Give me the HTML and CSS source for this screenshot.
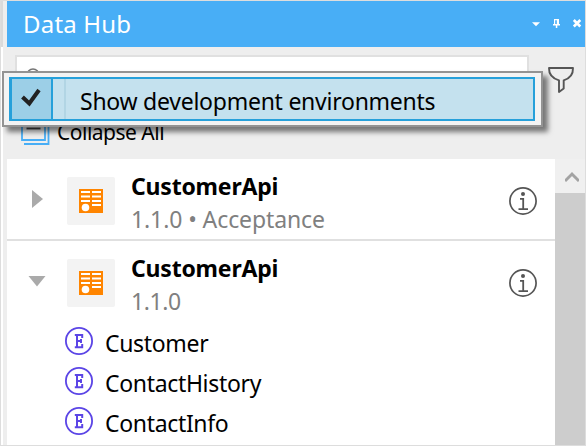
FILE: index.html
```html
<!DOCTYPE html>
<html lang="en">
<head>
<meta charset="utf-8">
<title>Data Hub</title>
<link rel="stylesheet" href="styles.css">
</head>
<body>
<svg class="defs" width="0" height="0" aria-hidden="true">
  <symbol id="service" viewBox="0 0 24 24">
    <path fill="#ff8500" d="M0 0h24v24H0z"/>
    <path fill="#fff" d="M2 2h9v2H2zM13 2h9v2h-9zM2 6.500h9v2H2zM13 6.500h9v2h-9zM2 11h9v2H2zM13 11h9v2h-9zM13 15h9v2h-9z"/>
    <circle cx="6.500" cy="18.500" r="3.800" fill="#fff"/>
  </symbol>
  <symbol id="info" viewBox="0 0 28 28">
    <circle cx="14" cy="14" r="13.100" fill="none" stroke="#555" stroke-width="1.700"/>
    <circle cx="14" cy="7" r="2" fill="#555"/>
    <path d="M11 11.800h3.200V22M9.500 22.200h9.500" fill="none" stroke="#555" stroke-width="1.800"/>
  </symbol>
  <symbol id="entity" viewBox="0 0 28 28">
    <circle cx="14" cy="14" r="13.100" fill="none" stroke="#5b45e6" stroke-width="1.800"/>
    <path d="M17.200 11V8H9.800M12 8v12M9.800 20.200h7.400V17M12 14h4M16 12v4" fill="none" stroke="#5b45e6" stroke-width="2"/>
  </symbol>
</svg>
<div class="window">
  <div class="gutter"></div>
  <main class="panel">
    <header class="titlebar">
      <h1 class="t-title">Data Hub</h1>
      <svg class="controls" width="52" height="14" viewBox="0 0 52 14" fill="#fff">
        <path d="M1 5.200h8L5 9.200z"/>
        <path d="M23 2h5v5h1v1.500h-2.700V11h-1.500V8.500H22V7h1zM24.200 3.200V7h1.600V3.200z" fill-rule="evenodd"/>
        <path d="M42.800 3l6.500 6.500M49.300 3l-6.500 6.500" stroke="#fff" stroke-width="2.600"/>
      </svg>
    </header>
    <section class="toolbar">
      <div class="search-row">
        <div class="search">
          <svg width="18" height="18" viewBox="0 0 18 18" fill="none" stroke="#777" stroke-width="1.500"><circle cx="7" cy="7" r="6"/><path d="M11.500 11.500l5 5"/></svg>
        </div>
        <svg class="funnel" width="28" height="28" viewBox="0 0 28 28" fill="none" stroke="#555" stroke-width="1.900" stroke-linejoin="round"><path d="M2 2h24c.2 7-3.500 10.600-9.300 12.300v8.200L12 26V14.300C6 12.600 1.800 9 2 2z"/></svg>
      </div>
      <div class="collapse">
        <svg width="29" height="29" viewBox="0 0 29 29" fill="none" stroke="#48aef6" stroke-width="1.800"><path d="M1 1h23v23H1zM3 28h24.500V5"/><path d="M5.500 12.500h14" stroke="#444"/></svg>
        <span class="t-collapse">Collapse All</span>
      </div>
    </section>
    <section class="content">
      <div class="list">
        <article class="service">
          <svg class="arrow" width="18" height="18" viewBox="0 0 18 18"><path d="M4 0l11 9L4 18z" fill="#aaa"/></svg>
          <div class="tile"><svg width="24" height="24"><use href="#service"/></svg></div>
          <div class="meta"><h2 class="t-name">CustomerApi</h2><p class="t-env">1.1.0 • Acceptance</p></div>
          <svg class="info" width="28" height="28"><use href="#info"/></svg>
        </article>
        <article class="service">
          <svg class="arrow" width="18" height="18" viewBox="0 0 18 18"><path d="M.500 4h17L9 14.500z" fill="#aaa"/></svg>
          <div class="tile"><svg width="24" height="24"><use href="#service"/></svg></div>
          <div class="meta"><h2 class="t-name">CustomerApi</h2><p class="t-version">1.1.0</p></div>
          <svg class="info" width="28" height="28"><use href="#info"/></svg>
        </article>
        <ul class="entities">
          <li><svg width="28" height="28"><use href="#entity"/></svg><span>Customer</span></li>
          <li><svg width="28" height="28"><use href="#entity"/></svg><span>ContactHistory</span></li>
          <li><svg width="28" height="28"><use href="#entity"/></svg><span>ContactInfo</span></li>
        </ul>
      </div>
      <div class="scrollbar">
        <div class="up"><svg width="14" height="12" viewBox="0 0 14 12"><path d="M0 10l7-7 7 7" fill="none" stroke="#a3a3a3" stroke-width="3"/></svg></div>
      </div>
    </section>
  </main>
  <div class="menu">
    <div class="option">
      <div class="check"><svg width="20" height="19" viewBox="0 0 20 19"><path d="M1.500 9l6.800 6.500L18 2" fill="none" stroke="#222" stroke-width="4"/></svg></div>
      <div class="label"><span class="t-menu">Show development environments</span></div>
    </div>
  </div>
</div>
</body>
</html>
```
FILE: styles.css
```css
* { box-sizing: border-box; margin: 0; padding: 0; }
body {
  width: 586px;
  height: 446px;
  overflow: hidden;
  background: #fff;
  font: 23px/32px "Noto Sans", "Open Sans", sans-serif;
  color: #000;
}
svg { display: block; flex: none; }
span, h1, h2, p { white-space: nowrap; }
.defs { position: absolute; }
.window {
  position: relative;
  display: flex;
  height: 446px;
  border: 1px solid #ddd;
}
.gutter {
  width: 6px;
  border-left: 2px solid #fff;
  background: #eee;
}
.gutter::before {
  content: "";
  display: block;
  width: 2px;
  height: 46px;
  margin-left: -2px;
  background: #dadada;
}
.panel { flex: 1; display: flex; flex-direction: column; min-width: 0; }
.titlebar {
  display: flex;
  align-items: center;
  justify-content: space-between;
  height: 46px;
  padding: 0 2px 0 16px;
  background: #48aef6;
  color: #fff;
}
.titlebar h1 { font-size: 24px; font-weight: 400; letter-spacing: .2px; }
.toolbar { height: 112px; padding: 8px 8px 0; background: #eee; }
.search-row { display: flex; gap: 18px; }
.search {
  width: 514px;
  height: 44px;
  padding: 11px 0 0 9px;
  border: 2px solid #e0e0e0;
  background: #fff;
}
.funnel { margin-top: 11px; }
.collapse { display: flex; align-items: center; gap: 7px; margin: 17px 0 0 6px; height: 29px; }
.t-collapse { padding-top: 3px; font-size: 21px; letter-spacing: -.5px; }
.content { flex: 1; display: flex; min-height: 0; }
.list { flex: 1; min-width: 0; overflow: hidden; }
.service { display: flex; height: 82px; padding: 9px 18px 0 21px; }
.service:first-child { border-bottom: 2px solid #e0e0e0; }
.arrow { margin-top: 22px; }
.tile {
  display: grid;
  place-items: center;
  width: 48px;
  height: 48px;
  margin: 9px 16px 0 21px;
  border-radius: 2px;
  background: #f3f3f3;
}
.meta { flex: 1; color: #808080; }
.meta h2 { height: 32px; color: #000; font-size: 23px; font-weight: 700; line-height: 37px; letter-spacing: -.2px; }
.meta p { line-height: 38px; letter-spacing: -.1px; }
.meta .t-version { letter-spacing: -.4px; }
.info { margin-top: 19px; }
.entities { list-style: none; margin-top: -2px; }
.entities li { display: flex; align-items: center; gap: 12px; height: 40px; padding-left: 58px; }
.entities li span { line-height: 40px; padding-top: 3px; letter-spacing: -.33px; }
.scrollbar { width: 30px; background: #cdcdcd; }
.up { height: 34px; padding: 12px 0 0 10px; background: #f0f0f0; }
.menu {
  position: absolute;
  left: 1px;
  top: 70px;
  width: 541px;
  height: 56px;
  padding: 4px 6px 4px 5px;
  border: 2px solid #939393;
  background: #f3f3f3;
  box-shadow: 5px 5px 5px rgba(0, 0, 0, .5);
}
.option { display: flex; height: 44px; border: 2px solid #26a0da; background: #c4e1ee; }
.check {
  width: 42px;
  padding: 9px 0 0 9px;
  border: solid #26a0da;
  border-width: 0 2px 0 1px;
  background: #9ccfe7;
}
.label { flex: 1; margin-left: 11px; padding-left: 14px; border-left: 2px solid #b2d5e4; line-height: 44px; }
.t-menu { letter-spacing: -.25px; }
```
